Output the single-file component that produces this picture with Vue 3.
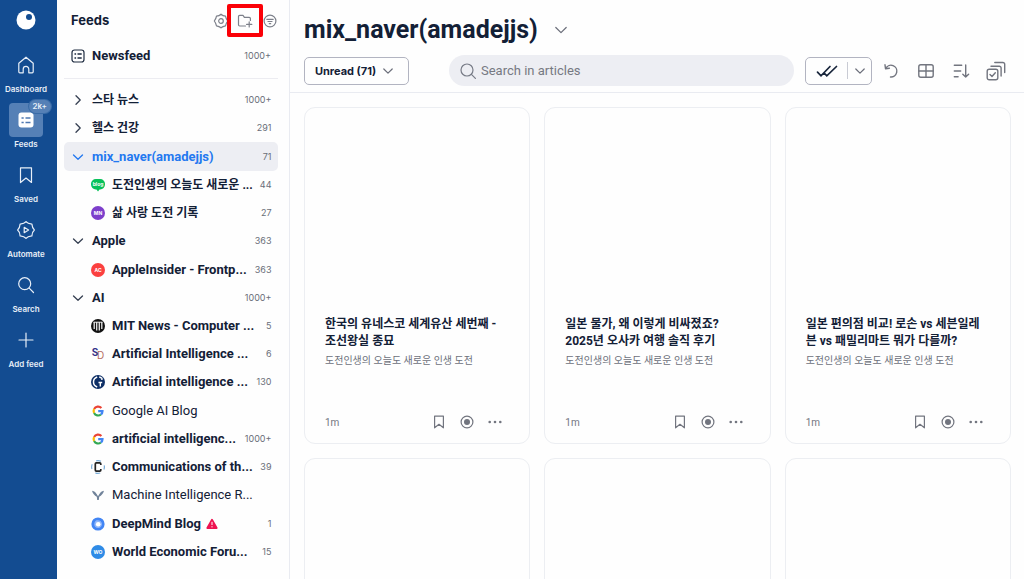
<script setup>
import { ref } from 'vue'

const query = ref('')

const navItems = [
  { id: 'dashboard', label: 'Dashboard' },
  { id: 'feeds', label: 'Feeds', badge: '2k+' },
  { id: 'saved', label: 'Saved' },
  { id: 'automate', label: 'Automate' },
  { id: 'search', label: 'Search' },
  { id: 'add', label: 'Add feed' },
]

const rows = [
  { kind: 'folder', label: '스타 뉴스', count: '1000+', ko: true },
  { kind: 'folder', label: '헬스 건강', count: '291', ko: true },
  { kind: 'folder', label: 'mix_naver(amadejjs)', count: '71', open: true, selected: true },
  { kind: 'feed', icon: 'blog', label: '도전인생의 오늘도 새로운 ...', count: '44', ko: true },
  { kind: 'feed', icon: 'mn', label: '삶 사랑 도전 기록', count: '27', ko: true },
  { kind: 'folder', label: 'Apple', count: '363', open: true },
  { kind: 'feed', icon: 'ac', label: 'AppleInsider - Frontp...', count: '363' },
  { kind: 'folder', label: 'AI', count: '1000+', open: true },
  { kind: 'feed', icon: 'mit', label: 'MIT News - Computer ...', count: '5' },
  { kind: 'feed', icon: 'sd', label: 'Artificial Intelligence ...', count: '6' },
  { kind: 'feed', icon: 'guardian', label: 'Artificial intelligence ...', count: '130' },
  { kind: 'feed', icon: 'google', label: 'Google AI Blog', read: true },
  { kind: 'feed', icon: 'google', label: 'artificial intelligenc...', count: '1000+' },
  { kind: 'feed', icon: 'acm', label: 'Communications of th...', count: '39' },
  { kind: 'feed', icon: 'miri', label: 'Machine Intelligence R...', read: true },
  { kind: 'feed', icon: 'deepmind', label: 'DeepMind Blog', count: '1', alert: true },
  { kind: 'feed', icon: 'wo', label: 'World Economic Foru...', count: '15' },
]

const source = '도전인생의 오늘도 새로운 인생 도전'
const articles = [
  { title: '한국의 유네스코 세계유산 세번째 -\n조선왕실 종묘', source, age: '1m' },
  { title: '일본 물가, 왜 이렇게 비싸졌죠?\n2025년 오사카 여행 솔직 후기', source, age: '1m' },
  { title: '일본 편의점 비교! 로손 vs 세븐일레븐 vs 패밀리마트 뭐가 다를까?', source, age: '1m' },
]
</script>

<template>
  <div class="app">
    <nav class="rail" aria-label="Main">
      <a class="logo" href="#" aria-label="Home">
        <svg width="20" height="20" viewBox="0 0 20 20"><circle cx="10" cy="10" r="9.5" fill="#fff" /><circle cx="13" cy="7" r="3" fill="#134c91" /></svg>
      </a>
      <a v-for="item in navItems" :key="item.id" href="#" class="nav-item">
        <span class="tile" :class="{ active: item.badge }">
          <svg v-if="item.id === 'dashboard'" class="line" width="20" height="20" viewBox="0 0 20 20"><path d="M2.800 8.200 10 2.200l7.200 6v8.600a1 1 0 0 1-1 1h-3.400v-3.600a2.800 2.800 0 0 0-5.600 0v3.600H3.800a1 1 0 0 1-1-1z" /></svg>
          <svg v-else-if="item.id === 'feeds'" width="20" height="20" viewBox="0 0 20 20"><rect x="2.500" y="2.500" width="15" height="15" rx="3" fill="#fff" /><g stroke="#4f79b2" stroke-width="1.600"><path d="M5.500 8h2.200M9.500 8h5M5.500 12.500h2.200M9.500 12.500h5" /></g></svg>
          <svg v-else-if="item.id === 'saved'" class="line" width="20" height="20" viewBox="0 0 20 20"><path d="M4.500 2.800h11v14.700L10 13l-5.500 4.500z" /></svg>
          <svg v-else-if="item.id === 'automate'" class="line" width="20" height="20" viewBox="0 0 20 20"><path d="M10 1.600c1.300 1.700 2.600 2.200 5.900 2.500.3 3.300.8 4.600 2.500 5.900-1.700 1.300-2.200 2.600-2.500 5.900-3.300.3-4.600.8-5.900 2.500-1.300-1.700-2.600-2.200-5.900-2.500-.3-3.300-.8-4.600-2.500-5.900 1.700-1.300 2.200-2.600 2.500-5.900 3.300-.3 4.600-.8 5.900-2.500z" /><path d="m8.200 7.300 4.400 2.700-4.400 2.700z" /></svg>
          <svg v-else-if="item.id === 'search'" class="line" width="20" height="20" viewBox="0 0 20 20"><circle cx="8.700" cy="8.700" r="6" /><path d="m13.200 13.200 4.300 4.300" /></svg>
          <svg v-else class="line" width="20" height="20" viewBox="0 0 20 20"><path d="M10 3v14M3 10h14" /></svg>
          <span v-if="item.badge" class="badge">{{ item.badge }}</span>
        </span>
        <span class="nav-label">{{ item.label }}</span>
      </a>
    </nav>

    <aside class="sidebar">
      <header class="side-head">
        <h2>Feeds</h2>
        <div class="side-tools">
          <button type="button" aria-label="Settings">
            <svg class="line" width="16" height="16" viewBox="0 0 16 16"><path d="M8 1.200c1.400 1.300 2.300 1.700 4.500 2 .3 1.900.8 3 2.200 4.800-1.400 1.800-1.900 2.900-2.200 4.800-2.200.3-3.100.7-4.500 2-1.400-1.300-2.300-1.700-4.500-2C3.200 10.900 2.700 9.800 1.300 8c1.400-1.800 1.900-2.900 2.200-4.800 2.200-.3 3.100-.7 4.500-2z" /><circle cx="8" cy="8" r="2.300" /></svg>
          </button>
          <button type="button" class="add-folder" aria-label="Add folder">
            <svg class="line" width="16" height="16" viewBox="0 0 16 16"><path d="M8.500 13H2.700a1.200 1.200 0 0 1-1.200-1.200V3.600a1.200 1.200 0 0 1 1.200-1.200H6l1.400 2h4.800a1.200 1.200 0 0 1 1.200 1.200V7.500M12.200 8.800v5.200M9.600 11.400h5.200" /></svg>
          </button>
          <button type="button" aria-label="Filter">
            <svg class="line" width="16" height="16" viewBox="0 0 16 16"><circle cx="8" cy="8" r="5.900" /><path d="M4.800 6.300h6.400M6 8.500h4M7.300 10.700h1.400" /></svg>
          </button>
        </div>
      </header>
      <a href="#" class="row newsfeed">
        <svg width="14" height="14" viewBox="0 0 14 14" fill="none" stroke="#1d2a3f"><rect x="1" y="1" width="12" height="12" rx="2.500" stroke-width="1.200" /><path d="M3.500 5h1.600M6.500 5h4.200M3.500 9h1.600M6.500 9h4.200" stroke-width="1.300" /></svg>
        <span class="name">Newsfeed</span>
        <span class="count">1000+</span>
      </a>
      <ul class="tree">
        <li v-for="(row, i) in rows" :key="i">
          <a href="#" class="row" :class="{ selected: row.selected, feed: row.kind === 'feed', read: row.read }">
            <svg v-if="row.kind === 'folder'" class="chevron" width="14" height="14" viewBox="0 0 14 14"><path :d="row.open ? 'M2.500 5 7 9.300l4.500-4.300' : 'M5 2.700 9.200 7l-4.200 4.300'" /></svg>
            <svg v-else-if="row.icon === 'blog'" width="14" height="14" viewBox="0 0 14 14"><path d="M4.800 1h4.400A4.800 4.800 0 0 1 14 5.800v.8a4.800 4.800 0 0 1-4.800 4.800h-.7L7 13.500l-1.500-2.100h-.7A4.800 4.800 0 0 1 0 6.600v-.8A4.800 4.800 0 0 1 4.800 1z" fill="#08c15a" /><text x="7" y="7.800" class="glyph" font-size="5">blog</text></svg>
            <svg v-else-if="row.icon === 'mn'" width="14" height="14" viewBox="0 0 14 14"><circle cx="7" cy="7" r="7" fill="#7d3fcb" /><text x="7" y="8.800" class="glyph" font-size="5">MN</text></svg>
            <svg v-else-if="row.icon === 'ac'" width="14" height="14" viewBox="0 0 14 14"><circle cx="7" cy="7" r="7" fill="#fb403f" /><text x="7" y="8.800" class="glyph" font-size="5">AC</text></svg>
            <svg v-else-if="row.icon === 'wo'" width="14" height="14" viewBox="0 0 14 14"><circle cx="7" cy="7" r="7" fill="#2f8be6" /><text x="7" y="8.800" class="glyph" font-size="5">WO</text></svg>
            <svg v-else-if="row.icon === 'mit'" width="14" height="14" viewBox="0 0 14 14"><circle cx="7" cy="7" r="7" fill="#111" /><path d="M3.200 3v7M5.700 3v8.500M8.300 3v8.500M10.800 3v7" stroke="#e8e8e8" stroke-width="1.300" /><path d="M2.500 3.200h9" stroke="#e8e8e8" /></svg>
            <svg v-else-if="row.icon === 'sd'" width="14" height="14" viewBox="0 0 14 14"><text x="4" y="9" class="glyph sd-s" font-size="10">S</text><text x="9.500" y="12" class="glyph sd-d" font-size="10">D</text></svg>
            <svg v-else-if="row.icon === 'guardian'" width="14" height="14" viewBox="0 0 14 14"><circle cx="7" cy="7" r="7" fill="#0e2f66" /><path d="M6.200 2C3.800 2.800 2.500 4.600 2.500 7s1.300 4.200 3.700 5" fill="none" stroke="#fff" stroke-width="1.500" /><path d="M8.200 2c1.200.2 2 .7 2.700 1.300v1.800M7.500 7.500h3.700M9.300 7.500v4" fill="none" stroke="#fff" stroke-width="1.400" /></svg>
            <svg v-else-if="row.icon === 'google'" width="14" height="14" viewBox="0 0 14 14" fill="none" stroke-width="2.200"><path d="M10.400 4A4.500 4.500 0 0 0 3.100 5" stroke="#ea4335" /><path d="M3.100 5a4.600 4.600 0 0 0 0 4" stroke="#fbbc05" /><path d="M3.100 9a4.500 4.500 0 0 0 6.800 1.500" stroke="#34a853" /><path d="M9.900 10.500A4.300 4.300 0 0 0 11.500 7.200H7.200" stroke="#4285f4" /></svg>
            <svg v-else-if="row.icon === 'acm'" width="14" height="14" viewBox="0 0 14 14"><circle cx="7" cy="7" r="6.400" fill="none" stroke="#78acd8" stroke-width="1.200" stroke-dasharray="5 5" stroke-dashoffset="2.500" /><path d="M9.800 5V3.900a1 1 0 0 0-1-1H5.300a1 1 0 0 0-1 1v6.200a1 1 0 0 0 1 1h3.500a1 1 0 0 0 1-1V9" fill="none" stroke="#222" stroke-width="1.700" /></svg>
            <svg v-else-if="row.icon === 'miri'" width="14" height="14" viewBox="0 0 14 14"><path d="M1 2.800c2.500.4 4.600 2 6 4.600 1.400-2.600 3.500-4.200 6-4.600-.7 2.800-2.500 4.700-4.800 6L7.800 12H6.200l-.4-3.200C3.500 7.500 1.700 5.600 1 2.800z" fill="#71839a" /><path d="m4 2.500 3 5 3-5" fill="none" stroke="#fff" /></svg>
            <svg v-else width="14" height="14" viewBox="0 0 14 14"><circle cx="7" cy="7" r="6.600" fill="#4285f4" /><path d="M5 3.500c3-1 5.800.6 6 3.500.1 2.300-1.700 4-4 4-2 0-3.700-1.500-3.700-3.600C3.300 5.500 4 4.500 5 3.500z" fill="#8fb6fa" /><circle cx="7.200" cy="7.200" r="2.300" fill="#fff" /></svg>
            <span class="name" :class="{ ko: row.ko }">{{ row.label }}</span>
            <svg v-if="row.alert" class="alert" width="12" height="12" viewBox="0 0 12 12"><path d="M6 1.700 10.700 10H1.300z" fill="#ee1451" stroke="#ee1451" stroke-width="1.800" stroke-linejoin="round" /><path d="M6 3.800V7M6 8.200v1.200" stroke="#fff" /></svg>
            <span v-if="row.count" class="count">{{ row.count }}</span>
          </a>
        </li>
      </ul>
    </aside>

    <main class="main">
      <header class="top">
        <h1>
          mix_naver(amadejjs)
          <button type="button" class="plain" aria-label="Folder menu"><svg class="line" width="14" height="14" viewBox="0 0 14 14"><path d="m1.800 4.500 5.200 5.200 5.200-5.200" /></svg></button>
        </h1>
        <div class="toolbar">
          <button type="button" class="outlined unread">
            Unread (71)
            <svg class="line" width="12" height="12" viewBox="0 0 12 12"><path d="m1.800 4 4.200 4.200L10.200 4" /></svg>
          </button>
          <label class="search">
            <svg class="line" width="18" height="18" viewBox="0 0 18 18"><circle cx="8" cy="8" r="6" /><path d="m12.400 12.400 4 4" /></svg>
            <input v-model="query" type="text" placeholder="Search in articles" aria-label="Search in articles" />
          </label>
          <div class="outlined split">
            <button type="button" aria-label="Mark all as read"><svg width="22" height="14" viewBox="0 0 22 14" fill="none" stroke="#17243a" stroke-width="1.700" stroke-linecap="round"><path d="m1.500 8.200 3.500 3.600L14 2.500M8.200 9.200l2.600 2.600L20.500 2.500" /></svg></button>
            <button type="button" class="more" aria-label="More options"><svg class="line" width="12" height="12" viewBox="0 0 12 12"><path d="m1.800 4 4.200 4.200L10.200 4" /></svg></button>
          </div>
          <div class="tools">
            <button type="button" aria-label="Refresh"><svg class="line tool" width="20" height="20" viewBox="0 0 20 20"><path d="M4.800 7.200A5.900 5.900 0 1 1 9.500 16M4 3.800l.5 3.900 3.900-.5" /></svg></button>
            <button type="button" aria-label="Layout"><svg class="line tool" width="20" height="20" viewBox="0 0 20 20"><rect x="2.800" y="3.800" width="14.400" height="12.400" rx="2" /><path d="M10 3.800v12.400M2.800 10h14.400" /></svg></button>
            <button type="button" aria-label="Sort"><svg class="line tool" width="20" height="20" viewBox="0 0 20 20"><path d="M3.300 4.200h7.400M3.300 10h6.400M3.300 15.800h3.800M14.700 4v12M11.800 13.200l2.900 2.900 2.900-2.900" /></svg></button>
            <button type="button" aria-label="Select articles"><svg class="line tool" width="20" height="20" viewBox="0 0 20 20"><rect x="1.200" y="8.200" width="10.600" height="10.600" rx="2" /><path d="m4 13.500 2 2 3.300-3.800M5 5.200h8.300a1.800 1.800 0 0 1 1.800 1.800v8M8.800 1.500h8.100a1.800 1.800 0 0 1 1.800 1.800v8.200" /></svg></button>
          </div>
        </div>
      </header>
      <section class="grid" aria-label="Articles">
        <article v-for="(a, i) in articles" :key="i" class="card">
          <div class="thumb"></div>
          <h3>{{ a.title }}</h3>
          <p>{{ a.source }}</p>
          <footer>
            <time>{{ a.age }}</time>
            <button type="button" aria-label="Save"><svg class="line" width="16" height="16" viewBox="0 0 16 16"><path d="M3.600 2.200h8.800v11.600L8 10.300l-4.400 3.500z" /></svg></button>
            <button type="button" aria-label="Mark as read"><svg class="line" width="16" height="16" viewBox="0 0 16 16"><circle cx="8" cy="8" r="5.900" /><circle cx="8" cy="8" r="3" class="dot" /></svg></button>
            <button type="button" aria-label="More"><svg width="16" height="16" viewBox="0 0 16 16" fill="#72757f"><circle cx="2.700" cy="8" r="1.300" /><circle cx="8" cy="8" r="1.300" /><circle cx="13.300" cy="8" r="1.300" /></svg></button>
          </footer>
        </article>
        <article v-for="n in 3" :key="'next' + n" class="card"></article>
      </section>
    </main>
  </div>
</template>

<style>
body {
  margin: 0;
}
</style>

<style scoped>
.app {
  display: flex;
  height: 100vh;
  overflow: hidden;
  background: #fefefe;
  color: #132036;
  font-family: Roboto, "Noto Sans CJK KR", sans-serif;
  font-size: 13px;
}
.app * {
  box-sizing: border-box;
}
a {
  color: inherit;
  text-decoration: none;
}
button {
  display: flex;
  align-items: center;
  justify-content: center;
  padding: 0;
  border: 0;
  background: none;
  color: inherit;
  font: inherit;
}
svg {
  display: block;
  flex: none;
}
.line {
  fill: none;
  stroke: currentColor;
  stroke-width: 1.200;
  stroke-linecap: round;
  stroke-linejoin: round;
}
h1,
h2,
h3,
p,
ul {
  margin: 0;
  padding: 0;
}

.rail {
  display: flex;
  flex: none;
  flex-direction: column;
  align-items: center;
  width: 57px;
  padding: 10px 5px 0 0;
  background: #134c91;
  color: #e8eff8;
}
.logo {
  margin-bottom: 18px;
}
.nav-item {
  display: flex;
  flex-direction: column;
  align-items: center;
  height: 55px;
}
.tile {
  position: relative;
  display: flex;
  align-items: center;
  justify-content: center;
  width: 34px;
  height: 34px;
  border-radius: 4px;
}
.tile.active {
  background: #5580b6;
}
.badge {
  position: absolute;
  top: -3px;
  right: -8px;
  padding: 0 4px;
  border-radius: 7px;
  background: #5580b6;
  box-shadow: 0 0 0 1px #396ba7;
  font: 600 8px/13px Inter, sans-serif;
}
.nav-label {
  font: 600 8px/14px Inter, sans-serif;
  white-space: nowrap;
}

.sidebar {
  display: flex;
  flex: none;
  flex-direction: column;
  width: 233px;
  padding: 4px 11px 13px 7px;
  border-right: 1px solid #e9ebf1;
}
.side-head {
  display: flex;
  align-items: center;
  justify-content: space-between;
  height: 33px;
  padding: 0 0 0 7px;
}
h2 {
  padding-bottom: 2px;
  font: 700 13px/16px Inter, sans-serif;
}
.side-tools {
  display: flex;
  align-items: center;
  color: #7d808a;
}
.side-tools button {
  width: 17px;
}
.side-tools .add-folder {
  width: 36px;
  height: 33px;
  margin: 0 -2px;
  border: 4px solid #fb0007;
  border-radius: 2px;
}
.row {
  display: flex;
  align-items: center;
  height: 100%;
  padding: 0 7px;
  border-radius: 5px;
  gap: 7px;
}
.newsfeed {
  flex: none;
  height: 38px;
}
.tree {
  display: grid;
  flex: 1;
  grid-auto-rows: minmax(28px, 1fr);
  margin-top: 3px;
  padding-top: 7px;
  border-top: 1px solid #ececf1;
  list-style: none;
}
.row.feed {
  padding-left: 27px;
}
.row.selected {
  background: #edeef3;
}
.selected .name,
.selected .chevron {
  color: #2378f0;
}
.chevron {
  color: #364052;
  fill: none;
  stroke: currentColor;
  stroke-width: 1.300;
  stroke-linecap: round;
  stroke-linejoin: round;
}
.name {
  font-weight: 700;
  line-height: 18px;
  white-space: nowrap;
}
.name.ko {
  font-size: 12px;
}
.read .name {
  font-weight: 400;
}
.count {
  margin-left: auto;
  color: #6a6e79;
  font: 400 9px/12px Inter, sans-serif;
}
.glyph {
  fill: #fff;
  font-family: Inter, sans-serif;
  font-weight: 700;
  text-anchor: middle;
}
.sd-s {
  fill: #35348a;
}
.sd-d {
  fill: #b4695d;
  font-weight: 400;
}
.alert {
  margin-left: -2px;
}

.main {
  display: flex;
  flex: 1;
  flex-direction: column;
  min-width: 0;
}
.top {
  flex: none;
  padding: 15px 13px 6px 14px;
  border-bottom: 1px solid #e9ebf1;
}
h1 {
  display: flex;
  align-items: center;
  gap: 16px;
  font-size: 25px;
  font-weight: 700;
  line-height: 30px;
}
.plain,
.outlined .line {
  color: #6b6e7a;
}
.toolbar {
  display: flex;
  align-items: center;
  margin-top: 10px;
}
.outlined {
  height: 28px;
  border: 1px solid #b2b4c1;
  border-radius: 5px;
}
.unread {
  width: 105px;
  margin-right: 40px;
  padding-right: 4px;
  gap: 6px;
  font: 700 11px/16px Inter, sans-serif;
}
.search {
  display: flex;
  flex: 1;
  align-items: center;
  min-width: 0;
  height: 31px;
  margin-right: 11px;
  padding: 0 10px;
  border-radius: 16px;
  background: #edeef3;
  color: #777b86;
  gap: 4px;
}
.search input {
  flex: 1;
  min-width: 0;
  padding: 0;
  border: 0;
  outline: 0;
  background: none;
  color: #132036;
  font: inherit;
}
.search input::placeholder {
  color: #767982;
}
.split {
  display: flex;
  align-items: center;
}
.split button {
  width: 41px;
}
.split .more {
  width: 24px;
  height: 17px;
  border-left: 1px solid #c9cbd4;
}
.tools {
  display: flex;
  margin: 0 5px 0 9px;
  color: #72757f;
  gap: 15px;
}
.tool {
  stroke-width: 1.400;
}

.grid {
  display: grid;
  grid-template-columns: repeat(3, 1fr);
  padding: 14px 13px 14px 14px;
  gap: 14px;
}
.card {
  display: flex;
  flex-direction: column;
  min-height: 337px;
  padding: 0 20px 11px;
  border: 1px solid #eceef2;
  border-radius: 11px;
}
.thumb {
  height: 208px;
}
h3 {
  font-size: 12px;
  font-weight: 700;
  line-height: 17px;
  white-space: pre-line;
  word-break: break-all;
}
.card p {
  margin-top: 4px;
  color: #6c707b;
  font-size: 10px;
  line-height: 14px;
}
footer {
  display: flex;
  align-items: center;
  height: 20px;
  margin-top: auto;
  color: #72757f;
}
time {
  margin-right: auto;
  font-size: 10px;
}
footer button {
  width: 28px;
}
.dot {
  fill: currentColor;
  stroke: none;
}
</style>
